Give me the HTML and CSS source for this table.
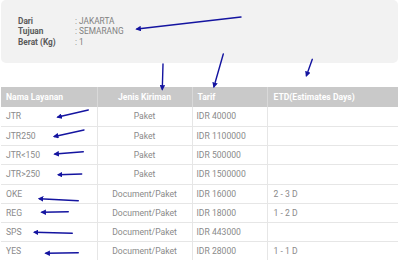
FILE: index.html
```html
<!DOCTYPE html>
<html>
<head>
<meta charset="utf-8">
<link rel="stylesheet" href="styles.css">
</head>
<body>
<div class="page">
  <div class="info">
    <div class="info-row"><span class="lbl">Dari</span><span class="val">: JAKARTA</span></div>
    <div class="info-row"><span class="lbl">Tujuan</span><span class="val">: SEMARANG</span></div>
    <div class="info-row"><span class="lbl">Berat (Kg)</span><span class="val">: 1</span></div>
  </div>
  <table class="rates">
    <thead>
      <tr><th class="c1">Nama Layanan</th><th class="c2">Jenis Kiriman</th><th class="c3">Tarif</th><th class="c4">ETD(Estimates Days)</th></tr>
    </thead>
    <tbody>
      <tr><td>JTR</td><td class="ctr">Paket</td><td>IDR 40000</td><td></td></tr>
      <tr><td>JTR250</td><td class="ctr">Paket</td><td>IDR 1100000</td><td></td></tr>
      <tr><td>JTR&lt;150</td><td class="ctr">Paket</td><td>IDR 500000</td><td></td></tr>
      <tr><td>JTR&gt;250</td><td class="ctr">Paket</td><td>IDR 1500000</td><td></td></tr>
      <tr><td>OKE</td><td class="ctr">Document/Paket</td><td>IDR 16000</td><td>2 - 3 D</td></tr>
      <tr><td>REG</td><td class="ctr">Document/Paket</td><td>IDR 18000</td><td>1 - 2 D</td></tr>
      <tr><td>SPS</td><td class="ctr">Document/Paket</td><td>IDR 443000</td><td></td></tr>
      <tr><td>YES</td><td class="ctr">Document/Paket</td><td>IDR 28000</td><td>1 - 1 D</td></tr>
    </tbody>
  </table>
</div>
<svg class="arrows" width="400" height="260" viewBox="0 0 400 260">
  <defs>
    <marker id="ah" viewBox="0 0 10 10" refX="7" refY="5" markerWidth="4" markerHeight="4" orient="auto-start-reverse">
      <path d="M0 0 L10 5 L0 10 Z" fill="#1414a0"/>
    </marker>
  </defs>
  <g stroke="#1414a0" stroke-width="1.4" fill="none" stroke-linecap="round" marker-end="url(#ah)">
    <line x1="241" y1="17" x2="137" y2="29"/>
    <line x1="163" y1="64" x2="162.3" y2="89"/>
    <line x1="223.3" y1="54" x2="214" y2="86.5"/>
    <line x1="312.3" y1="59.3" x2="306.5" y2="75.5"/>
    <line x1="88.3" y1="110" x2="58" y2="117"/>
    <line x1="84" y1="130" x2="54.5" y2="136.5"/>
    <line x1="83.3" y1="151.7" x2="55" y2="154"/>
    <line x1="81.7" y1="174" x2="58.5" y2="174.7"/>
    <line x1="78.3" y1="200.7" x2="39.5" y2="198.7"/>
    <line x1="68.3" y1="211.7" x2="42" y2="212.3"/>
    <line x1="72.3" y1="233.3" x2="34.5" y2="232.3"/>
    <line x1="78.3" y1="252.7" x2="46" y2="253.3"/>
  </g>
</svg>
</body>
</html>
```
FILE: styles.css
```css
html, body {
  margin: 0;
  padding: 0;
  background: #ffffff;
}
body {
  font-family: Roboto, "Liberation Sans", sans-serif;
  font-size: 8px;
  position: relative;
  width: 400px;
  height: 260px;
  overflow: hidden;
}
.page {
  padding: 0 2px 0 1px;
}
.info {
  background: #f2f2f2;
  border-radius: 5px;
  height: 63px;
  box-sizing: border-box;
  padding: 15.5px 0 0 17px;
  font-size: 8.3px;
}
.info-row {
  display: flex;
  line-height: 10.5px;
  height: 10.5px;
}
.lbl {
  width: 57px;
  font-weight: bold;
  color: #5a5a5a;
}
.val {
  color: #808080;
}
.rates {
  margin-top: 24px;
  width: 397px;
  border-collapse: collapse;
  table-layout: fixed;
  font-size: 8.6px;
}
.rates th {
  background: #c9c9c9;
  color: #ffffff;
  font-weight: bold;
  text-align: left;
  height: 20px;
  padding: 0 5px;
  box-sizing: border-box;
  border-left: 1px solid #d9d9d9;
}
.rates th:first-child {
  border-left: none;
}
.rates th.c2 {
  text-align: center;
}
.c1 { width: 96px; }
.c2 { width: 95px; }
.c3 { width: 75px; }
.c4 { width: auto; }
.rates td {
  height: 19.25px;
  padding: 0 5px;
  box-sizing: border-box;
  color: #8a8a8a;
  border-bottom: 1px solid #e6e6e6;
  border-left: 1px solid #e6e6e6;
}
.rates td:first-child {
  border-left: none;
}
.rates td.ctr {
  text-align: center;
}
.rates td:nth-child(3) {
  padding-left: 4px;
}
.rates td:nth-child(4),
.rates th.c4 {
  padding-left: 6px;
}
.arrows {
  position: absolute;
  left: 0;
  top: 0;
  pointer-events: none;
}
```
